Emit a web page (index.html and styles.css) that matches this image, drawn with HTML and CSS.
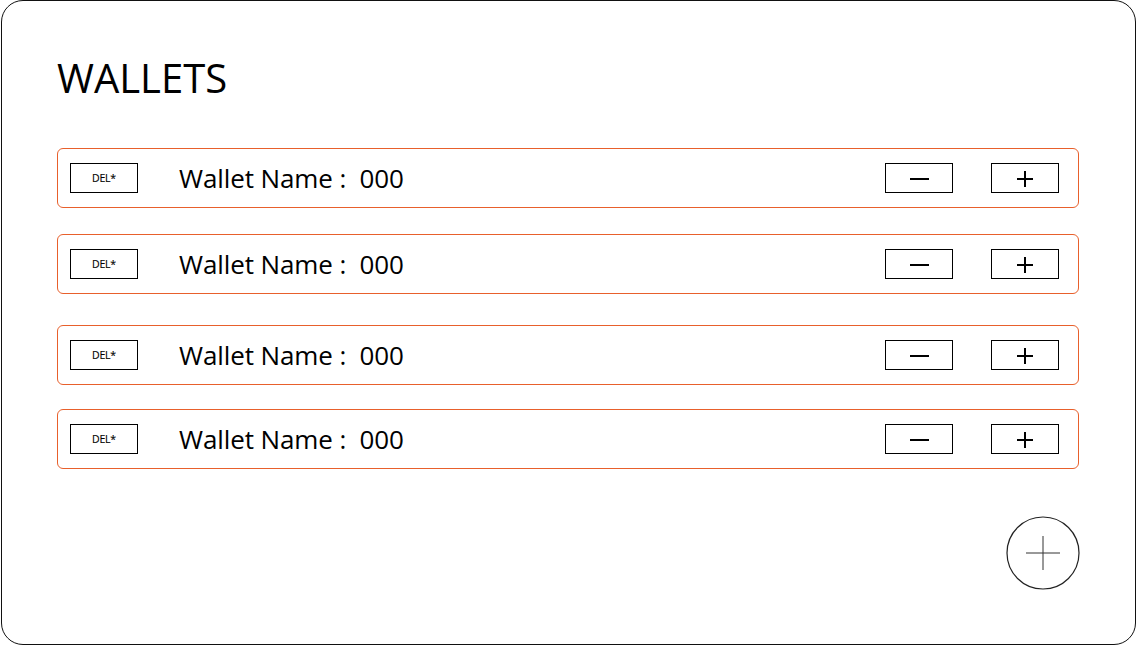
FILE: index.html
```html
<!DOCTYPE html>
<html>
<head>
<meta charset="utf-8">
<link rel="stylesheet" href="styles.css">
</head>
<body>
<div class="frame">
  <h1 class="title">WALLETS</h1>
  <div class="list">
    <div class="row r1">
      <div class="del">DEL*</div>
      <div class="name">Wallet Name :&nbsp; 000</div>
      <div class="btn minus"><span class="mbar"></span></div>
      <div class="btn plus"><span class="hbar"></span><span class="vbar"></span></div>
    </div>
    <div class="row r2">
      <div class="del">DEL*</div>
      <div class="name">Wallet Name :&nbsp; 000</div>
      <div class="btn minus"><span class="mbar"></span></div>
      <div class="btn plus"><span class="hbar"></span><span class="vbar"></span></div>
    </div>
    <div class="row r3">
      <div class="del">DEL*</div>
      <div class="name">Wallet Name :&nbsp; 000</div>
      <div class="btn minus"><span class="mbar"></span></div>
      <div class="btn plus"><span class="hbar"></span><span class="vbar"></span></div>
    </div>
    <div class="row r4">
      <div class="del">DEL*</div>
      <div class="name">Wallet Name :&nbsp; 000</div>
      <div class="btn minus"><span class="mbar"></span></div>
      <div class="btn plus"><span class="hbar"></span><span class="vbar"></span></div>
    </div>
  </div>
  <div class="footer">
    <div class="add">
      <svg width="74" height="74" viewBox="0 0 74 74">
        <circle cx="37" cy="37" r="36" fill="none" stroke="#222" stroke-width="1.2"/>
        <line x1="20" y1="37" x2="54" y2="37" stroke="#333" stroke-width="1"/>
        <line x1="37" y1="20" x2="37" y2="54" stroke="#333" stroke-width="1"/>
      </svg>
    </div>
  </div>
</div>
</body>
</html>
```
FILE: styles.css
```css
html, body {
  margin: 0;
  padding: 0;
  background: #fff;
}
body {
  font-family: "Open Sans", "Noto Sans", sans-serif;
  color: #000;
}
.frame {
  box-sizing: border-box;
  width: 1135px;
  height: 645px;
  margin-left: 1px;
  border: 1.5px solid #111;
  border-radius: 22px;
  padding: 0 0 0 55px;
  display: flex;
  flex-direction: column;
}
.title {
  margin: 52px 0 0 0;
  font-size: 40px;
  font-weight: 400;
  line-height: 50px;
  height: 50px;
}
.list {
  display: flex;
  flex-direction: column;
  margin-top: 45px;
}
.row {
  box-sizing: border-box;
  width: 1022px;
  height: 60px;
  border: 1px solid #e8602c;
  border-radius: 6px;
  display: flex;
  align-items: center;
  padding-left: 12px;
}
.r2 { margin-top: 26px; }
.r3 { margin-top: 31px; }
.r4 { margin-top: 24px; }
.del {
  box-sizing: border-box;
  width: 68px;
  height: 30px;
  border: 1px solid #000;
  font-size: 10.5px;
  display: flex;
  align-items: center;
  justify-content: center;
  letter-spacing: -0.2px;
  -webkit-text-stroke: 0.15px #000;
}
.name {
  margin-left: 41px;
  font-size: 26px;
  flex: 1;
  letter-spacing: -0.1px;
}
.btn {
  box-sizing: border-box;
  width: 68px;
  height: 30px;
  border: 1px solid #000;
  position: relative;
}
.minus { margin-right: 38px; }
.plus { margin-right: 19px; }
.mbar, .hbar, .vbar {
  position: absolute;
  background: #000;
}
.mbar {
  left: 24px;
  top: 14px;
  width: 19px;
  height: 2px;
}
.hbar {
  left: 25px;
  top: 14px;
  width: 16px;
  height: 1.5px;
}
.vbar {
  left: 32px;
  top: 7px;
  width: 1.5px;
  height: 16px;
}
.footer {
  display: flex;
  justify-content: flex-end;
  width: 1023px;
  margin-top: 47px;
}
.add {
  width: 74px;
  height: 74px;
}
.add svg { display: block; }
```
